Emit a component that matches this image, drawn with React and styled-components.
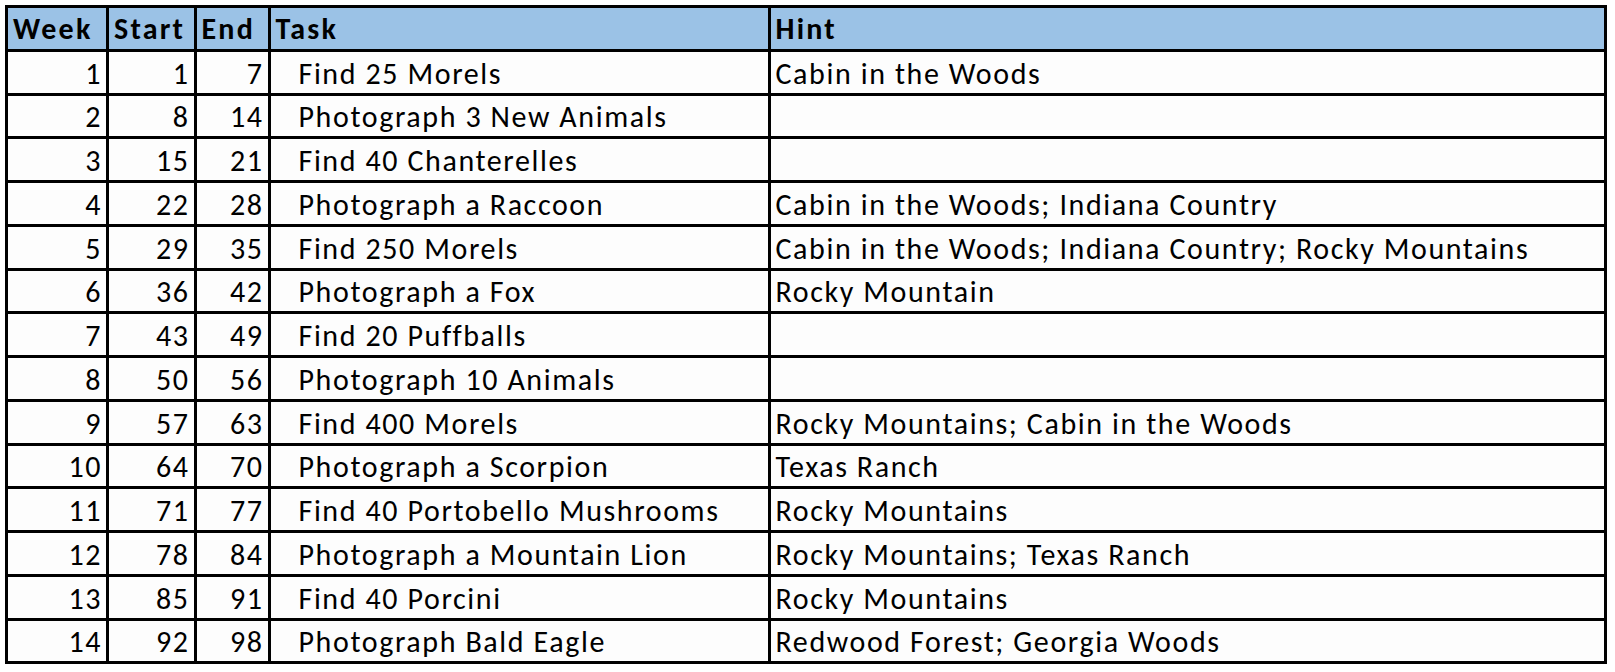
import React from 'react';
import styled, { createGlobalStyle } from 'styled-components';

const GlobalStyle = createGlobalStyle`
  html, body {
    margin: 0;
    padding: 0;
    background: #ffffff;
  }
  body {
    font-family: Carlito, Lato, "Liberation Sans", sans-serif;
  }
`;

const Page = styled.div`
  padding: 5px 0 0 5px;
`;

const Sheet = styled.div`
  display: grid;
  grid-template-columns: 98px 84.5px 71px 497px 833.5px;
  grid-auto-rows: 40.75px;
  gap: 3px;
  padding: 3px;
  width: max-content;
  background: #000000;
`;

const Cell = styled.div`
  display: flex;
  align-items: center;
  justify-content: ${(p) => (p.$num ? 'flex-end' : 'flex-start')};
  padding: 2px ${(p) => (p.$num ? '4px' : '0')} 0 ${(p) => (p.$indent ? '28px' : '5px')};
  background: #fdfdfd;
  color: #000000;
  font-size: 30px;
  letter-spacing: 1.6px;
  white-space: nowrap;
  overflow: hidden;
`;

const HeadCell = styled(Cell)`
  background: #9bc2e6;
  font-weight: 700;
  letter-spacing: 2.2px;
  padding: 0 0 0 5px;
`;

const rows = [
  [1, 1, 7, 'Find 25 Morels', 'Cabin in the Woods'],
  [2, 8, 14, 'Photograph 3 New Animals', ''],
  [3, 15, 21, 'Find 40 Chanterelles', ''],
  [4, 22, 28, 'Photograph a Raccoon', 'Cabin in the Woods; Indiana Country'],
  [5, 29, 35, 'Find 250 Morels', 'Cabin in the Woods; Indiana Country; Rocky Mountains'],
  [6, 36, 42, 'Photograph a Fox', 'Rocky Mountain'],
  [7, 43, 49, 'Find 20 Puffballs', ''],
  [8, 50, 56, 'Photograph 10 Animals', ''],
  [9, 57, 63, 'Find 400 Morels', 'Rocky Mountains; Cabin in the Woods'],
  [10, 64, 70, 'Photograph a Scorpion', 'Texas Ranch'],
  [11, 71, 77, 'Find 40 Portobello Mushrooms', 'Rocky Mountains'],
  [12, 78, 84, 'Photograph a Mountain Lion', 'Rocky Mountains; Texas Ranch'],
  [13, 85, 91, 'Find 40 Porcini', 'Rocky Mountains'],
  [14, 92, 98, 'Photograph Bald Eagle', 'Redwood Forest; Georgia Woods'],
];

function App() {
  return (
    <>
      <GlobalStyle />
      <Page>
        <Sheet>
          <HeadCell>Week</HeadCell>
          <HeadCell>Start</HeadCell>
          <HeadCell>End</HeadCell>
          <HeadCell>Task</HeadCell>
          <HeadCell>Hint</HeadCell>
          {rows.map(([week, start, end, task, hint]) => (
            <React.Fragment key={week}>
              <Cell $num>{week}</Cell>
              <Cell $num>{start}</Cell>
              <Cell $num>{end}</Cell>
              <Cell $indent>{task}</Cell>
              <Cell>{hint}</Cell>
            </React.Fragment>
          ))}
        </Sheet>
      </Page>
    </>
  );
}

export default App;
